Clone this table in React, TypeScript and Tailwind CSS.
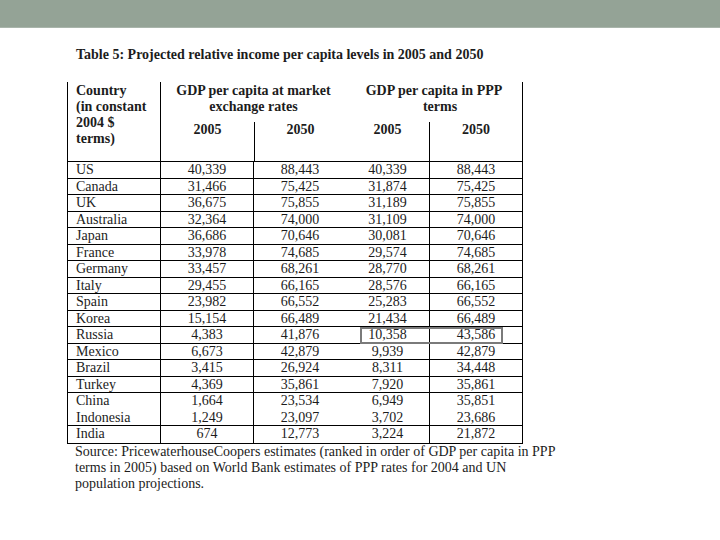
import React from 'react';

interface Row {
  country: string;
  m05: string;
  m50: string;
  p05: string;
  p50: string;
}

const rows: Row[] = [
  { country: 'US', m05: '40,339', m50: '88,443', p05: '40,339', p50: '88,443' },
  { country: 'Canada', m05: '31,466', m50: '75,425', p05: '31,874', p50: '75,425' },
  { country: 'UK', m05: '36,675', m50: '75,855', p05: '31,189', p50: '75,855' },
  { country: 'Australia', m05: '32,364', m50: '74,000', p05: '31,109', p50: '74,000' },
  { country: 'Japan', m05: '36,686', m50: '70,646', p05: '30,081', p50: '70,646' },
  { country: 'France', m05: '33,978', m50: '74,685', p05: '29,574', p50: '74,685' },
  { country: 'Germany', m05: '33,457', m50: '68,261', p05: '28,770', p50: '68,261' },
  { country: 'Italy', m05: '29,455', m50: '66,165', p05: '28,576', p50: '66,165' },
  { country: 'Spain', m05: '23,982', m50: '66,552', p05: '25,283', p50: '66,552' },
  { country: 'Korea', m05: '15,154', m50: '66,489', p05: '21,434', p50: '66,489' },
  { country: 'Russia', m05: '4,383', m50: '41,876', p05: '10,358', p50: '43,586' },
  { country: 'Mexico', m05: '6,673', m50: '42,879', p05: '9,939', p50: '42,879' },
  { country: 'Brazil', m05: '3,415', m50: '26,924', p05: '8,311', p50: '34,448' },
  { country: 'Turkey', m05: '4,369', m50: '35,861', p05: '7,920', p50: '35,861' },
  { country: 'China', m05: '1,664', m50: '23,534', p05: '6,949', p50: '35,851' },
  { country: 'Indonesia', m05: '1,249', m50: '23,097', p05: '3,702', p50: '23,686' },
  { country: 'India', m05: '674', m50: '12,773', p05: '3,224', p50: '21,872' },
];

export default function App() {
  return (
    <div className="w-[720px] h-[540px] bg-white overflow-hidden font-['Liberation_Serif',serif] text-[#1c1c1c]">
      <div className="h-[28px] bg-[#94a396] border-b border-[#a9b5ab]" />

      <div className="pl-[67px] pt-[19px]">
        <div className="pl-[9px] text-[14px] leading-[16px] font-bold">
          Table 5: Projected relative income per capita levels in 2005 and 2050
        </div>

        {/* table */}
        <div className="mt-[19px] w-[456px] border-x border-b border-black">
          {/* header */}
          <div className="flex h-[80px] border-b border-black text-[14px] leading-[16px] font-bold">
            <div className="w-[92px] shrink-0 pl-[8px] pt-[1px]">
              Country
              <br />
              (in constant
              <br />
              2004 $
              <br />
              terms)
            </div>
            <div className="w-[186px] shrink-0 border-l border-black flex flex-col">
              <div className="h-[40px] pt-[1px] text-center">
                GDP per capita at market
                <br />
                exchange rates
              </div>
              <div className="flex flex-1">
                <div className="w-[93px] text-center">2005</div>
                <div className="flex-1 border-l border-black text-center">2050</div>
              </div>
            </div>
            <div className="flex-1 flex flex-col">
              <div className="h-[40px] pt-[1px] text-center">
                GDP per capita in PPP
                <br />
                <span className="pl-[12px]">terms</span>
              </div>
              <div className="flex flex-1">
                <div className="w-[83px] text-center">2005</div>
                <div className="flex-1 border-l border-black text-center">2050</div>
              </div>
            </div>
          </div>

          {/* body */}
          {rows.map((r, i) => (
            <div
              key={r.country}
              className={
                'relative flex h-[16.5px] text-[14px] leading-[16px] ' +
                (i < rows.length - 1 && r.country !== 'China' ? 'border-b border-black' : '')
              }
            >
              <div className="w-[92px] shrink-0 pl-[8px]">{r.country}</div>
              <div className="w-[93px] shrink-0 border-l border-black text-center">{r.m05}</div>
              <div className="w-[93px] shrink-0 border-l border-black text-center">{r.m50}</div>
              <div className="w-[83px] shrink-0 text-center">{r.p05}</div>
              <div className="flex-1 border-l border-black text-center">{r.p50}</div>
              {r.country === 'Russia' && (
                <div className="absolute left-[292px] top-0 w-[143px] h-[17px] border-2 border-[#7a7a7a]" />
              )}
            </div>
          ))}
        </div>

        <div className="pl-[8px] text-[14px] leading-[16px] w-[500px]">
          Source: PricewaterhouseCoopers estimates (ranked in order of GDP per capita in PPP
          <br />
          terms in 2005) based on World Bank estimates of PPP rates for 2004 and UN
          <br />
          population projections.
        </div>
      </div>
    </div>
  );
}
